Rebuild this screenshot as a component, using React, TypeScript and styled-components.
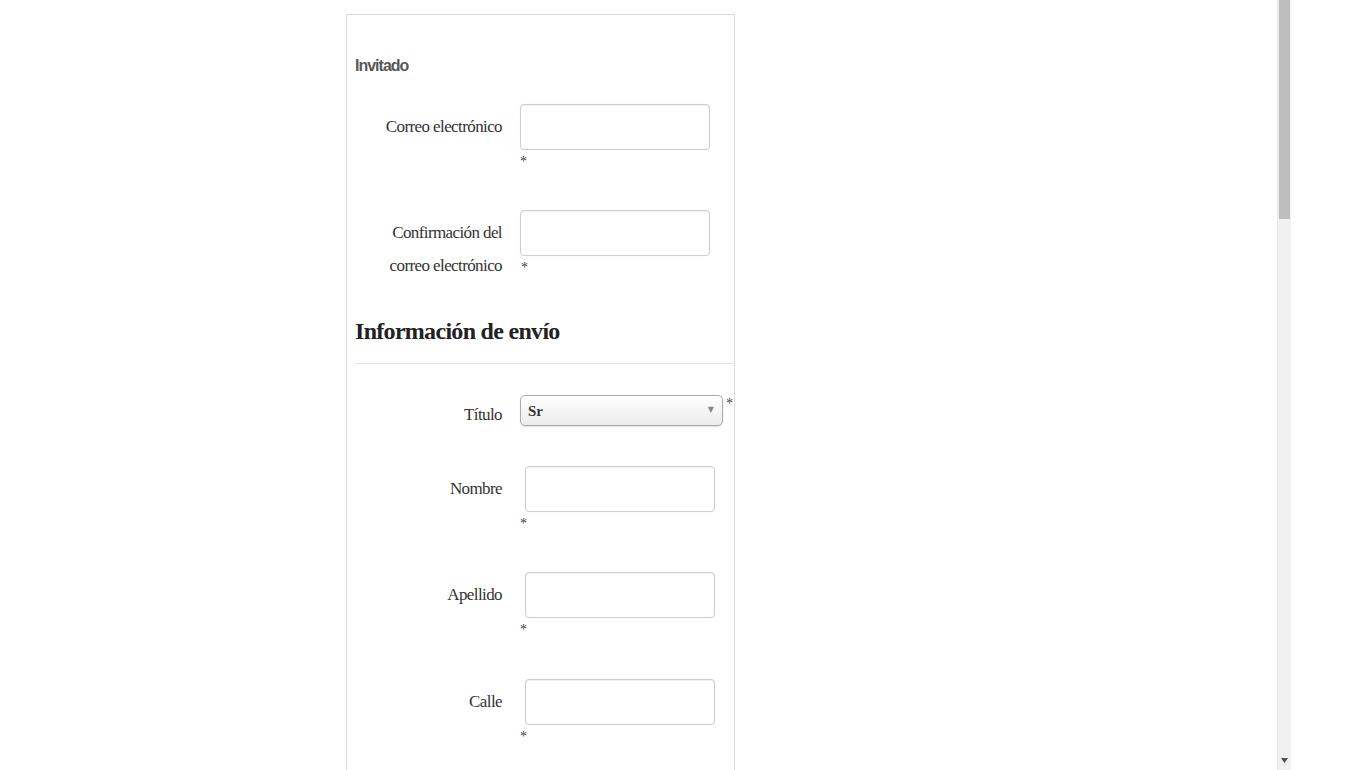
import React from 'react';
import styled, { createGlobalStyle } from 'styled-components';

const Global = createGlobalStyle`
  html, body { margin: 0; padding: 0; background: #fff; }
  body { font-family: "Liberation Serif", serif; overflow: hidden; }
  #root { width: 1357px; height: 770px; }
`;

const Screen = styled.div`
  display: flex;
  width: 1357px;
  height: 770px;
  overflow: hidden;
  background: #fff;
`;

const Viewport = styled.main`
  flex: none;
  width: 1277px;
  height: 770px;
  overflow: hidden;
`;

const Panel = styled.section`
  margin: 14px 0 0 346px;
  width: 389px;
  min-height: 800px;
  box-sizing: border-box;
  border: 1px solid #dadada;
  border-bottom: none;
  padding: 0 0 0 8px;
`;

const GuestTitle = styled.h3`
  margin: 0 0 26px;
  padding-top: 39px;
  font-family: "Liberation Sans", sans-serif;
  font-weight: 700;
  font-size: 16px;
  line-height: 24px;
  letter-spacing: -1px;
  color: #585858;
`;

const Row = styled.div<{ $mb: number }>`
  display: grid;
  grid-template-columns: 147px 1fr;
  column-gap: 18px;
  align-items: start;
  margin-bottom: ${(p) => p.$mb}px;
`;

const Label = styled.label<{ $pt?: number }>`
  display: block;
  text-align: right;
  font-family: "Liberation Serif", serif;
  font-size: 17px;
  line-height: 33px;
  letter-spacing: -0.6px;
  color: #333;
  padding-top: ${(p) => (p.$pt ?? 6)}px;
`;

const Field = styled.div`
  display: flex;
  flex-direction: column;
  align-items: flex-start;
`;

const TextInput = styled.input<{ $shift?: boolean }>`
  width: 190px;
  height: 46px;
  box-sizing: border-box;
  margin: 0 0 0 ${(p) => (p.$shift ? 5 : 0)}px;
  border: 1px solid #cfcfcf;
  border-radius: 4px;
  background: #fff;
  box-shadow: inset 0 1px 1px rgba(0, 0, 0, 0.06), 0 0 2px rgba(0, 0, 0, 0.06);
  outline: none;
`;

const Req = styled.span<{ $dx?: number }>`
  display: block;
  margin: 0 0 0 ${(p) => (p.$dx ?? 0)}px;
  font-family: "Liberation Serif", serif;
  font-size: 14px;
  line-height: 23px;
  color: #444;
`;

const SectionTitle = styled.h2`
  margin: 34px 0 17px;
  font-family: "Liberation Serif", serif;
  font-weight: 700;
  font-size: 24px;
  line-height: 30px;
  letter-spacing: -0.7px;
  color: #222;
`;

const Divider = styled.hr`
  margin: 0 0 31px;
  border: none;
  border-top: 1px solid #e3e3e3;
  height: 0;
`;

const SelectLine = styled.div`
  display: flex;
  align-items: flex-start;
`;

const SelectWrap = styled.div`
  position: relative;
  width: 203px;
  height: 31px;
`;

const Select = styled.select`
  appearance: none;
  -webkit-appearance: none;
  width: 203px;
  height: 31px;
  box-sizing: border-box;
  margin: 0;
  padding: 0 0 0 7px;
  border: 1px solid #a9a9a9;
  border-radius: 5px;
  background: linear-gradient(#ffffff, #ececec);
  box-shadow: 0 1px 2px rgba(0, 0, 0, 0.12);
  font-family: "Liberation Serif", serif;
  font-weight: 700;
  font-size: 15px;
  color: #333;
  outline: none;
`;

const Caret = styled.span`
  position: absolute;
  right: 9px;
  top: 10px;
  font-family: "DejaVu Sans", sans-serif;
  font-size: 8px;
  line-height: 10px;
  color: #888;
  pointer-events: none;
`;

const SideReq = styled.span`
  margin: 3px 0 0 3px;
  font-family: "Liberation Serif", serif;
  font-size: 14px;
  line-height: 12px;
  color: #444;
`;

const ScrollTrack = styled.div`
  flex: none;
  width: 14px;
  height: 770px;
  box-sizing: border-box;
  background: #f1f1f1;
  border-left: 1px solid #e9e9e9;
  display: flex;
  flex-direction: column;
`;

const Thumb = styled.div`
  height: 219px;
  margin: 0 1px 0 1px;
  background: #bdbdbd;
`;

const ArrowDown = styled.div`
  margin-top: auto;
  height: 12px;
  display: flex;
  align-items: flex-start;
  justify-content: center;
`;

type FieldDef = { label: string; mb: number; shift?: boolean };

const shipping: FieldDef[] = [
  { label: 'Nombre', mb: 37, shift: true },
  { label: 'Apellido', mb: 38, shift: true },
  { label: 'Calle', mb: 37, shift: true },
];

export default function App() {
  return (
    <>
      <Global />
      <Screen>
        <Viewport>
          <Panel>
            <GuestTitle>Invitado</GuestTitle>
            <Row $mb={37}>
              <Label>Correo electrónico</Label>
              <Field>
                <TextInput type="text" />
                <Req>*</Req>
              </Field>
            </Row>
            <Row $mb={0}>
              <Label>
                Confirmación del
                <br />
                correo electrónico
              </Label>
              <Field>
                <TextInput type="text" />
                <Req $dx={1}>*</Req>
              </Field>
            </Row>
            <SectionTitle>Información de envío</SectionTitle>
            <Divider />
            <Row $mb={35}>
              <Label $pt={3}>Título</Label>
              <SelectLine>
                <SelectWrap>
                  <Select defaultValue="Sr">
                    <option value="Sr">Sr</option>
                    <option value="Sra">Sra</option>
                  </Select>
                  <Caret>▼</Caret>
                </SelectWrap>
                <SideReq>*</SideReq>
              </SelectLine>
            </Row>
            {shipping.map((f) => (
              <Row key={f.label} $mb={f.mb}>
                <Label>{f.label}</Label>
                <Field>
                  <TextInput type="text" $shift={f.shift} />
                  <Req>*</Req>
                </Field>
              </Row>
            ))}
          </Panel>
        </Viewport>
        <ScrollTrack>
          <Thumb />
          <ArrowDown>
            <svg width="7" height="6" viewBox="0 0 7 6">
              <path d="M0 0 H7 L3.5 5 Z" fill="#505050" />
            </svg>
          </ArrowDown>
        </ScrollTrack>
      </Screen>
    </>
  );
}
